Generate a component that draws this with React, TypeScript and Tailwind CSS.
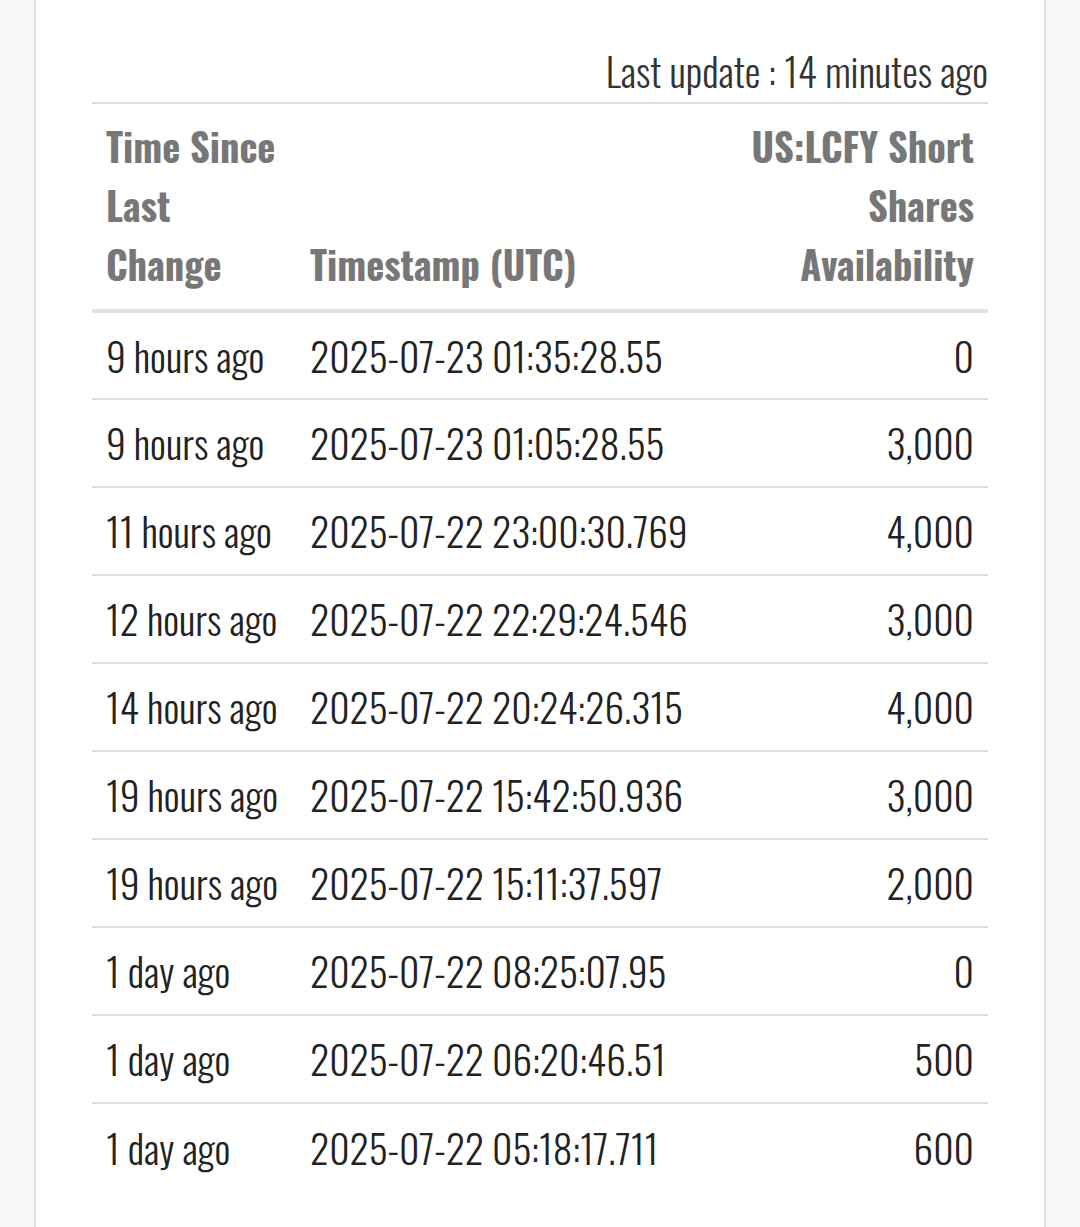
import * as React from 'react';

const rows = [
  ['9 hours ago', '2025-07-23 01:35:28.55', '0'],
  ['9 hours ago', '2025-07-23 01:05:28.55', '3,000'],
  ['11 hours ago', '2025-07-22 23:00:30.769', '4,000'],
  ['12 hours ago', '2025-07-22 22:29:24.546', '3,000'],
  ['14 hours ago', '2025-07-22 20:24:26.315', '4,000'],
  ['19 hours ago', '2025-07-22 15:42:50.936', '3,000'],
  ['19 hours ago', '2025-07-22 15:11:37.597', '2,000'],
  ['1 day ago', '2025-07-22 08:25:07.95', '0'],
  ['1 day ago', '2025-07-22 06:20:46.51', '500'],
  ['1 day ago', '2025-07-22 05:18:17.711', '600'],
];

export default function App() {
  return (
    <div
      className="flex min-h-[1227px] w-[1080px] bg-[#f7f7f7] pl-[34px] pr-[34px]"
      style={{ fontFamily: '"Oswald", "Roboto Condensed", "DejaVu Sans Condensed", "Liberation Sans Narrow", sans-serif' }}
    >
      <div className="flex-1 border-x-2 border-[#e3e3e3] bg-white px-[56px] pt-[38px]">
        <div className="flex justify-end text-[39.5px] font-light leading-[64px] text-[#333]">
          Last update : 14 minutes ago
        </div>
        <table className="w-full border-collapse text-left">
          <thead>
            <tr className="border-t-2 border-b-4 border-t-[#dedede] border-b-[#dee2e6] text-[38.4px] font-bold leading-[59px] text-[#777]">
              <th className="w-[204px] px-[14px] pb-[16px] pt-[12px] align-bottom">Time Since Last Change</th>
              <th className="px-[14px] pb-[16px] align-bottom">Timestamp (UTC)</th>
              <th className="w-[266px] px-[14px] pb-[16px] text-right align-bottom">US:LCFY Short Shares Availability</th>
            </tr>
          </thead>
          <tbody>
            {rows.map((r, i) => (
              <tr key={i} className="h-[88px] border-b-2 border-[#dee2e6] text-[39.5px] font-light text-[#222] last:border-b-0">
                <td className="whitespace-nowrap px-[14px]">{r[0]}</td>
                <td className="whitespace-nowrap px-[14px]">{r[1]}</td>
                <td className="px-[14px] text-right">{r[2]}</td>
              </tr>
            ))}
          </tbody>
        </table>
      </div>
    </div>
  );
}
